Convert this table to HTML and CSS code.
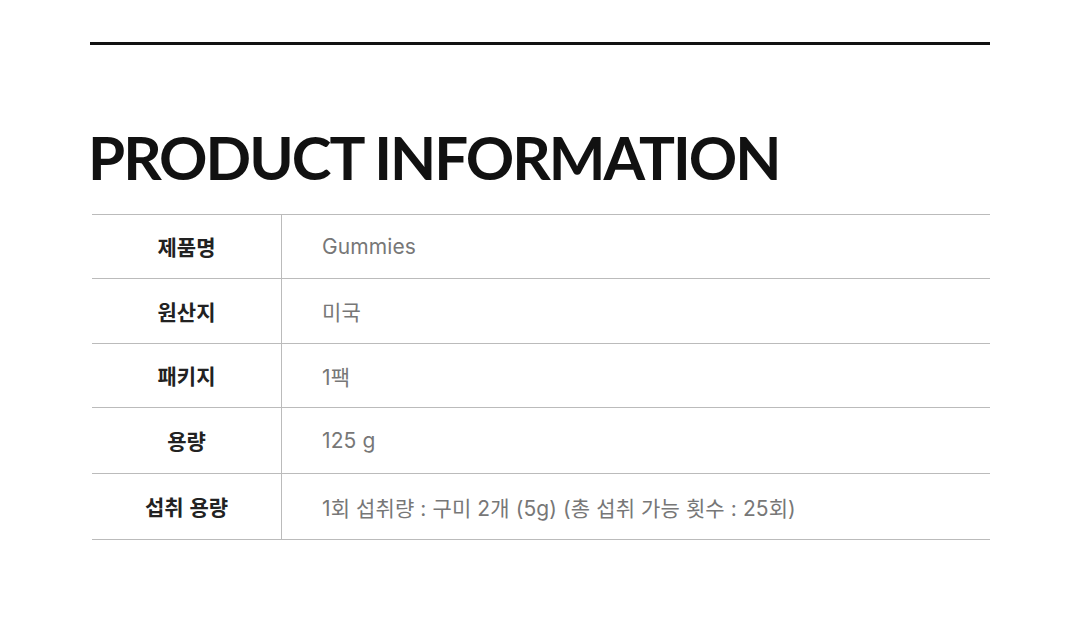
FILE: index.html
```html
<!DOCTYPE html>
<html lang="ko">
<head>
<meta charset="utf-8">
<link rel="stylesheet" href="styles.css">
</head>
<body>
<div class="wrap">
  <div class="topline"></div>
  <h1 class="title">PRODUCT INFORMATION</h1>
  <div class="table">
    <div class="row r1"><div class="th">제품명</div><div class="td">Gummies</div></div>
    <div class="row r2"><div class="th">원산지</div><div class="td">미국</div></div>
    <div class="row r3"><div class="th">패키지</div><div class="td">1팩</div></div>
    <div class="row r4"><div class="th">용량</div><div class="td">125 g</div></div>
    <div class="row r5"><div class="th">섭취 용량</div><div class="td">1회 섭취량 : 구미 2개 (5g) (총 섭취 가능 횟수 : 25회)</div></div>
  </div>
</div>
</body>
</html>
```
FILE: styles.css
```css
html, body { margin: 0; padding: 0; background: #fff; }
body { font-family: "Noto Sans CJK KR", "Noto Sans", sans-serif; }
.wrap { width: 900px; margin-left: 90px; padding-top: 42px; }
.topline { height: 3px; background: #111; }
.title {
  margin: 82px 0 0 -2px;
  font-family: "Lato", "Noto Sans", sans-serif;
  font-weight: 700;
  font-size: 60px;
  line-height: 60px;
  color: #111;
  letter-spacing: -2px;
}
.table { margin-top: 27px; margin-left: 2px; border-top: 1px solid #bbb; }
.row { display: flex; height: 63px; border-bottom: 1px solid #bbb; }
.r2 { height: 64px; }
.r4, .r5 { height: 65px; }
.th {
  width: 189px; border-right: 1px solid #bbb;
  display: flex; align-items: center; justify-content: center;
  font-size: 21px; font-weight: 700; color: #222;
  padding-bottom: 1px;
}
.td {
  flex: 1; display: flex; align-items: center;
  padding-left: 40px;
  font-family: "Inter", "Noto Sans CJK KR", sans-serif;
  font-size: 21px; font-weight: 400; color: #777;
  letter-spacing: 0.1px;
}
```
